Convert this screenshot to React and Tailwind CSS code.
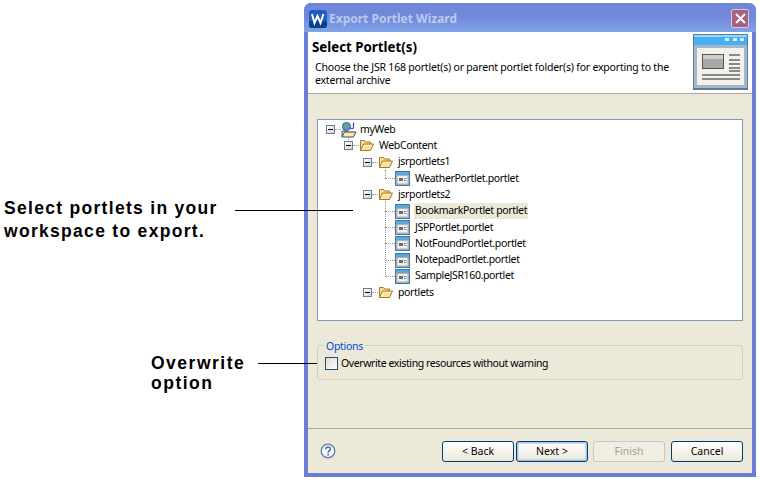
const uiFont = { fontFamily: '"Noto Sans", "Liberation Sans", Arial, sans-serif' };
const calloutFont = { fontFamily: '"Liberation Sans", Arial, sans-serif' };

function Expander() {
  return (
    <span className="flex h-[9px] w-[9px] shrink-0 items-center justify-center border border-[#6f7f8f] bg-gradient-to-br from-white to-[#c9d3dd]">
      <span className="h-px w-[5px] bg-black" />
    </span>
  );
}

function Folder() {
  return (
    <svg width="15" height="13" viewBox="0 0 15 13" className="shrink-0">
      <path d="M1.500 11.500V1.500h4l1 1.500h5v2" fill="#fbdf9a" stroke="#a9781c" />
      <path d="M1.500 11.500l3-6.500h10l-3 6.500z" fill="#fde3a0" stroke="#a9781c" strokeLinejoin="round" />
      <path d="M3 11l2.500-4.500h7" fill="none" stroke="#fff6d8" />
    </svg>
  );
}

function PortletIcon() {
  return (
    <svg width="15" height="15" viewBox="0 0 15 15" className="shrink-0">
      <rect x="0" y="0" width="15" height="15" fill="#54748e" />
      <rect x="1" y="1" width="13" height="2.500" fill="#47aeee" />
      <rect x="1" y="3.500" width="13" height="10.500" fill="#9db4c6" />
      <rect x="2.500" y="5" width="10" height="7.500" fill="#f2f2ee" />
      <rect x="4" y="7" width="4" height="3" fill="#6a6a6a" />
      <rect x="9" y="7" width="2.500" height="1" fill="#8a8a8a" />
      <rect x="9" y="9" width="2.500" height="1" fill="#8a8a8a" />
    </svg>
  );
}

function ProjectIcon() {
  return (
    <svg width="16" height="16" viewBox="0 0 16 16" className="shrink-0">
      <circle cx="5.500" cy="4.500" r="4" fill="#5b9bd0" stroke="#33648a" />
      <path d="M3 3l3-1.500 1 2.500-2 2z" fill="#6fae4a" />
      <path d="M12.500 0.500v5c0 1.500-3 1.500-3 0" fill="none" stroke="#2a4fb0" strokeWidth="1.200" />
      <path d="M1 15V9h4.500l1 1.200H13" fill="#fbe6a8" stroke="#33507a" />
      <path d="M1 15l2.500-5H15l-2.500 5z" fill="#fde9ae" stroke="#33507a" strokeLinejoin="round" />
    </svg>
  );
}

function BannerIcon() {
  return (
    <svg width="55" height="56" viewBox="0 0 55 56" className="shrink-0">
      <rect width="55" height="56" fill="#5c7c95" />
      <rect x="1" y="1" width="53" height="10" fill="#47b0f4" />
      <rect x="1" y="1" width="53" height="2" fill="#9bd7fa" />
      <rect x="32" y="4" width="4" height="3" fill="#d6effc" />
      <rect x="40" y="4" width="4" height="3" fill="#d6effc" />
      <rect x="47" y="4" width="4" height="3" fill="#d6effc" />
      <rect x="1" y="11" width="53" height="43" fill="#a6b8c6" />
      <rect x="4" y="14" width="47" height="37" fill="#f3f2ea" />
      <rect x="9" y="20" width="22" height="15" fill="#555" />
      <rect x="10" y="21" width="20" height="13" fill="#a8a8a8" />
      <rect x="10" y="21" width="20" height="4" fill="#d0d0d0" />
      <rect x="36" y="20" width="11" height="2" fill="#8a8a8a" />
      <rect x="36" y="25" width="11" height="2" fill="#8a8a8a" />
      <rect x="36" y="29" width="11" height="2" fill="#8a8a8a" />
      <rect x="36" y="33" width="11" height="2" fill="#8a8a8a" />
      <rect x="36" y="36" width="11" height="2" fill="#8a8a8a" />
      <rect x="9" y="40" width="38" height="2" fill="#8a8a8a" />
      <rect x="9" y="44" width="38" height="2" fill="#8a8a8a" />
    </svg>
  );
}

function TreeRow({ indent, icon, expander, label, selected, gap = "ml-[4px]" }) {
  return (
    <div className={`relative flex h-[16.3px] items-center ${indent}`}>
      {expander ? <Expander /> : <span className="w-[10px] shrink-0 border-t border-dotted border-[#9a9a8a]" />}
      {expander && <span className="w-[6px] shrink-0 border-t border-dotted border-[#9a9a8a]" />}
      {icon}
      <span className={`${gap} flex h-[16px] items-center whitespace-nowrap px-[1px] text-[10.500px] tracking-[-0.35px] text-black ${selected ? "w-[114px] bg-[#ece9d8]" : ""}`}>
        {label}
      </span>
    </div>
  );
}

function Btn({ label, disabled, primary }) {
  return (
    <button
      className={`flex h-[21px] w-[72px] items-center justify-center rounded-[3px] border text-[10.500px] ${
        disabled
          ? "border-[#c9c7ba] bg-[#f0eee3] text-[#a3a294]"
          : `border-[#003c74] bg-gradient-to-b from-white to-[#ece9d8] text-black ${primary ? "shadow-[inset_0_0_0_1.500px_#a8c4ee]" : ""}`
      }`}
    >
      {label}
    </button>
  );
}

export default function App() {
  return (
    <div className="relative h-[484px] w-[760px] overflow-hidden bg-white" style={uiFont}>
      {/* wizard window */}
      <div className="absolute left-[304px] top-[3px] flex h-[474px] w-[452px] flex-col overflow-hidden rounded-t-[7px] bg-[#6c7dd8] pb-[4px]">
        <div className="flex h-[29px] shrink-0 items-center bg-gradient-to-b from-[#6f86d8] via-[#7188dc] to-[#80a4e6] pl-[5px] pr-[7px] pt-[2px]">
          <svg width="18" height="18" viewBox="0 0 18 18" className="shrink-0">
            <rect width="18" height="18" rx="3" fill="#1a5fc0" />
            <path d="M0 12c5-3 12-3 18 0v3a3 3 0 0 1-3 3H3a3 3 0 0 1-3-3z" fill="#0b3f90" />
            <path d="M3 4l2.500 9 3-7 3 7L14.500 4" fill="none" stroke="#fff" strokeWidth="2" />
          </svg>
          <span className="ml-[2px] flex-1 pt-[1px] text-[12px] font-bold text-[#bcc9ef]">Export Portlet Wizard</span>
          <span className="flex h-[19px] w-[18px] items-center justify-center rounded-[2px] border border-[#c9cde6] bg-[#a9607e]">
            <svg width="11" height="11" viewBox="0 0 11 11">
              <path d="M1 1l9 9M10 1l-9 9" stroke="#fff" strokeWidth="2" />
            </svg>
          </span>
        </div>
        <div className="mx-[4px] flex min-h-0 flex-1 flex-col bg-[#ece9d8]">
          <div className="flex h-[62px] shrink-0 border-b border-[#a9a89c] bg-white">
            <div className="min-w-0 flex-1 pl-[4px]">
              <div className="mt-[7px] text-[13.300px] font-bold leading-[16px] text-black">Select Portlet(s)</div>
              <div className="mt-[6px] pl-[3px] text-[10.500px] leading-[13px] tracking-[-0.2px] text-black">
                Choose the JSR 168 portlet(s) or parent portlet folder(s) for exporting to the
                <br />
                external archive
              </div>
            </div>
            <div className="mr-[4px] mt-[2px]">
              <BannerIcon />
            </div>
          </div>
          <div className="flex flex-1 flex-col px-[9px] pt-[25px]">
            <div className="relative h-[202px] shrink-0 border border-[#7f9db9] bg-white pt-[1.500px]">
              <span className="absolute left-[30px] top-[16px] h-[6px] border-l border-dotted border-[#9a9a8a]" />
              <span className="absolute left-[67px] top-[50px] h-[8px] border-l border-dotted border-[#9a9a8a]" />
              <span className="absolute left-[67px] top-[81px] h-[74px] border-l border-dotted border-[#9a9a8a]" />
              <TreeRow indent="pl-[8px]" expander icon={<ProjectIcon />} label="myWeb" gap="ml-[2px]" />
              <TreeRow indent="pl-[26px]" expander icon={<Folder />} label="WebContent" />
              <TreeRow indent="pl-[45px]" expander icon={<Folder />} label="jsrportlets1" />
              <TreeRow indent="pl-[67px]" icon={<PortletIcon />} label="WeatherPortlet.portlet" />
              <TreeRow indent="pl-[45px]" expander icon={<Folder />} label="jsrportlets2" />
              <TreeRow indent="pl-[67px]" icon={<PortletIcon />} label="BookmarkPortlet portlet" selected />
              <TreeRow indent="pl-[67px]" icon={<PortletIcon />} label="JSPPortlet.portlet" />
              <TreeRow indent="pl-[67px]" icon={<PortletIcon />} label="NotFoundPortlet.portlet" />
              <TreeRow indent="pl-[67px]" icon={<PortletIcon />} label="NotepadPortlet.portlet" />
              <TreeRow indent="pl-[67px]" icon={<PortletIcon />} label="SampleJSR160.portlet" />
              <TreeRow indent="pl-[45px]" expander icon={<Folder />} label="portlets" />
            </div>
            <div className="relative mt-[24px] h-[35px] shrink-0 rounded-[3px] border border-[#d0d0bf]">
              <span className="absolute left-[6px] top-[-6px] bg-[#ece9d8] px-[2px] text-[10.500px] leading-[13px] tracking-[-0.3px] text-[#0046d5]">Options</span>
              <div className="flex h-full items-center pl-[7px] pt-[2px]">
                <span className="h-[13px] w-[13px] shrink-0 border border-[#1c5180] bg-gradient-to-br from-[#dcdcd7] to-white" />
                <span className="ml-[3px] text-[10.500px] tracking-[-0.4px] text-black">Overwrite existing resources without warning</span>
              </div>
            </div>
          </div>
          <div className="flex h-[45px] shrink-0 items-start border-t border-[#a9a89c] pl-[12px] pr-[9px] pt-[12px]">
            <svg width="16" height="16" viewBox="0 0 16 16" className="mt-[2px] shrink-0">
              <circle cx="8" cy="8" r="6.800" fill="#f4f6fb" stroke="#5d7fa8" strokeWidth="1.300" />
              <path d="M5.800 6.200c0-3 4.600-3 4.600-.2 0 1.800-2.300 1.800-2.300 3.700" fill="none" stroke="#4a6f9c" strokeWidth="1.500" />
              <rect x="7.300" y="10.800" width="1.700" height="1.700" fill="#4a6f9c" />
            </svg>
            <div className="ml-auto flex items-center">
              <Btn label="< Back" />
              <span className="w-[2px]" />
              <Btn label="Next >" primary />
              <span className="w-[5px]" />
              <Btn label="Finish" disabled />
              <span className="w-[6px]" />
              <Btn label="Cancel" />
            </div>
          </div>
        </div>
      </div>

      {/* callouts */}
      <div style={calloutFont} className="absolute left-[4px] top-[197px] text-[17.500px] font-bold leading-[23px] tracking-[1.300px] text-black">
        Select portlets in your
        <br />
        workspace to export.
      </div>
      <div className="absolute left-[235px] top-[210px] h-px w-[118px] bg-black" />
      <div style={calloutFont} className="absolute left-[151px] top-[353px] text-[17.500px] font-bold leading-[20px] tracking-[1.500px] text-black">
        Overwrite
        <br />
        option
      </div>
      <div className="absolute left-[258px] top-[363px] h-px w-[59px] bg-black" />
    </div>
  );
}
